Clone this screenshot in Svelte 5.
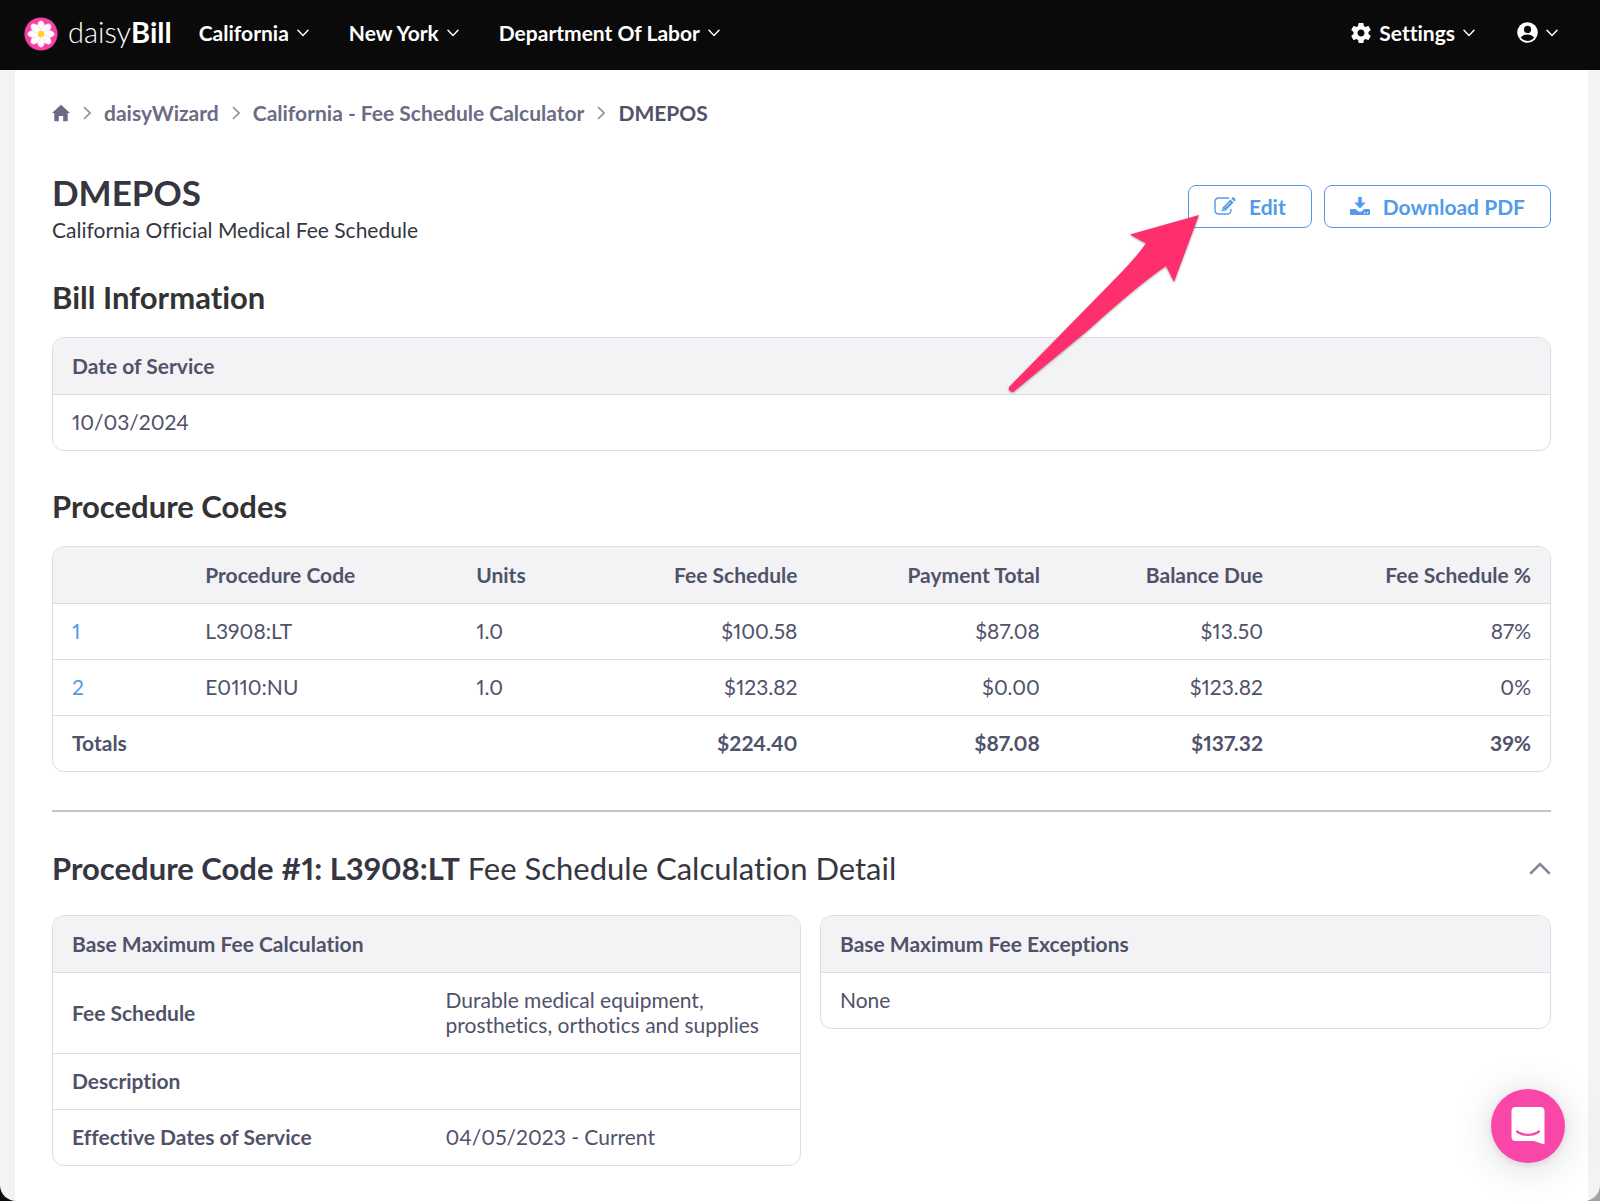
<script>
  const menus = ['California', 'New York', 'Department Of Labor'];

  const codes = [
    { id: 1, code: 'L3908:LT', units: '1.0', fee: '$100.58', paid: '$87.08', due: '$13.50', pct: '87%' },
    { id: 2, code: 'E0110:NU', units: '1.0', fee: '$123.82', paid: '$0.00', due: '$123.82', pct: '0%' }
  ];
  const totals = { fee: '$224.40', paid: '$87.08', due: '$137.32', pct: '39%' };

  const calculation = [
    { label: 'Fee Schedule', value: 'Durable medical equipment, prosthetics, orthotics and supplies' },
    { label: 'Description', value: '' },
    { label: 'Effective Dates of Service', value: '04/05/2023 - Current' }
  ];

  const petals = [0, 45, 90, 135, 180, 225, 270, 315];

  let open = true;
</script>

{#snippet down()}
  <svg class="down" width="12" height="8" viewBox="0 0 12 8" aria-hidden="true"><path d="M1 1.2 6 6.4 11 1.2" /></svg>
{/snippet}

{#snippet sep()}
  <svg class="sep" width="8" height="14" viewBox="0 0 8 14" aria-hidden="true"><path d="M1 1 7 7 1 13" /></svg>
{/snippet}

<div class="window">
  <header class="topbar">
    <a class="logo" href="/" aria-label="daisyBill">
      <svg width="34" height="34" viewBox="0 0 34 34" aria-hidden="true">
        <circle cx="17" cy="17" r="16.6" fill="#fa3fa4" />
        {#each petals as angle}
          <ellipse cx="17" cy="9.5" rx="3.6" ry="5.8" fill="#fff" stroke="#fbc6e2" stroke-width=".6" transform="rotate({angle} 17 17)" />
        {/each}
        <circle cx="17" cy="17" r="3.2" fill="#ffd51e" />
      </svg>
      <span class="word">daisy<b>Bill</b></span>
    </a>

    <nav class="menus">
      {#each menus as menu}
        <button type="button" class="menu">{menu}{@render down()}</button>
      {/each}
    </nav>

    <div class="menus user">
      <button type="button" class="menu">
        <svg width="20" height="20" viewBox="2 2 20 20" fill="#fff" aria-hidden="true">
          <path d="M19.43 12.98c.04-.32.07-.64.07-.98s-.03-.66-.07-.98l2.11-1.65c.19-.15.24-.42.12-.64l-2-3.46c-.12-.22-.39-.3-.61-.22l-2.49 1c-.52-.4-1.08-.73-1.69-.98l-.38-2.65C14.46 2.18 14.25 2 14 2h-4c-.25 0-.46.18-.49.42l-.38 2.65c-.61.25-1.17.59-1.69.98l-2.49-1c-.23-.09-.49 0-.61.22l-2 3.46c-.13.22-.07.49.12.64l2.11 1.65c-.04.32-.07.65-.07.98s.03.66.07.98l-2.11 1.65c-.19.15-.24.42-.12.64l2 3.46c.12.22.39.3.61.22l2.49-1c.52.4 1.08.73 1.69.98l.38 2.65c.03.24.24.42.49.42h4c.25 0 .46-.18.49-.42l.38-2.65c.61-.25 1.17-.59 1.69-.98l2.49 1c.23.09.49 0 .61-.22l2-3.46c.12-.22.07-.49-.12-.64l-2.11-1.65zM12 15.5c-1.93 0-3.5-1.57-3.5-3.5s1.57-3.5 3.5-3.5 3.5 1.57 3.5 3.5-1.57 3.5-3.5 3.5z" />
        </svg>
        Settings{@render down()}
      </button>
      <button type="button" class="menu" aria-label="Account">
        <svg width="21" height="21" viewBox="0 0 21 21" aria-hidden="true">
          <circle cx="10.5" cy="10.5" r="10.3" fill="#fff" />
          <circle cx="10.5" cy="7.4" r="3.6" fill="#0a0a0a" />
          <path d="M3.9 15.4c1.6-2 4-3 6.6-3s5 1 6.6 3a8 8 0 0 1-13.2 0z" fill="#0a0a0a" />
        </svg>
        {@render down()}
      </button>
    </div>
  </header>

  <main class="sheet">
    <nav class="crumbs" aria-label="Breadcrumb">
      <a href="/" aria-label="Home">
        <svg width="18" height="18" viewBox="0 0 18 18" fill="#6b6c84" aria-hidden="true"><path d="M9 .8 0 9h2.3v7.5c0 .5.3.8.8.8h3.7v-5.3h4.4v5.3h3.7c.5 0 .8-.3.8-.8V9H18z" /></svg>
      </a>
      {@render sep()}
      <a href="/wizard">daisyWizard</a>
      {@render sep()}
      <a href="/wizard/california">California - Fee Schedule Calculator</a>
      {@render sep()}
      <span class="current">DMEPOS</span>
    </nav>

    <div class="heading">
      <div>
        <h1>DMEPOS</h1>
        <p>California Official Medical Fee Schedule</p>
      </div>
      <div class="actions">
        <button type="button" class="btn">
          <svg width="22" height="18" viewBox="0 0 22 18" aria-hidden="true">
            <path d="M15 1H4.5A3.5 3.5 0 0 0 1 4.5v9A3.5 3.5 0 0 0 4.5 17h9a3.5 3.5 0 0 0 3.5-3.5V12" fill="none" stroke="#539ae9" stroke-width="1.4" />
            <path d="M16.4 2.4 19.6 5.6 11.8 13.6 7.6 14.6 8.6 10.4zM17.3 1.5l.7-.7c.6-.6 1.3-.6 1.8-.1l1.4 1.4c.5.5.5 1.2-.1 1.8l-.7.7z" fill="#539ae9" />
            <path d="M11 10.5 16.3 5.2M9.1 11.6 10.5 13" stroke="#fff" stroke-width=".8" />
          </svg>
          Edit
        </button>
        <button type="button" class="btn">
          <svg width="20" height="18" viewBox="0 0 20 18" fill="#539ae9" aria-hidden="true">
            <path d="M8.2 0h3.6v5.5h4L10 11.5 4.2 5.5h4z" />
            <path d="M1.3 12h4.3l2.6 2.2c1.1.9 2.5.9 3.6 0l2.6-2.2h4.3c.8 0 1.3.5 1.3 1.3v3.4c0 .8-.5 1.3-1.3 1.3H1.3C.5 18 0 17.5 0 16.7v-3.4C0 12.5.5 12 1.3 12z" />
            <path d="M14 15.3h1.5v1.2H14zM16.8 15.3h1.5v1.2h-1.5z" fill="#fff" />
          </svg>
          Download PDF
        </button>
        <!-- pointer to the Edit button -->
        <svg class="arrow" width="210" height="196" viewBox="0 0 210 196" aria-hidden="true">
          <path d="M200 10 131 29.5 147 38.5Q136 54 112 78L11 181A3.2 3.2 0 0 0 15.5 186L90 124.5Q138 81 167 61L175 77z" fill="#ff2f6e" />
        </svg>
      </div>
    </div>

    <h2>Bill Information</h2>
    <div class="box">
      <table>
        <thead><tr><th>Date of Service</th></tr></thead>
        <tbody><tr><td>10/03/2024</td></tr></tbody>
      </table>
    </div>

    <h2>Procedure Codes</h2>
    <div class="box">
      <table>
        <colgroup>
          <col class="c-id" /><col class="c-code" /><col class="c-units" /><col class="c-fee" />
          <col class="c-paid" /><col class="c-due" /><col />
        </colgroup>
        <thead>
          <tr>
            <th></th>
            <th>Procedure Code</th>
            <th>Units</th>
            <th class="num">Fee Schedule</th>
            <th class="num">Payment Total</th>
            <th class="num">Balance Due</th>
            <th class="num">Fee Schedule %</th>
          </tr>
        </thead>
        <tbody>
          {#each codes as row}
            <tr>
              <td><a href="#code-{row.id}">{row.id}</a></td>
              <td>{row.code}</td>
              <td>{row.units}</td>
              <td class="num">{row.fee}</td>
              <td class="num">{row.paid}</td>
              <td class="num">{row.due}</td>
              <td class="num">{row.pct}</td>
            </tr>
          {/each}
          <tr class="totals">
            <td colspan="3">Totals</td>
            <td class="num">{totals.fee}</td>
            <td class="num">{totals.paid}</td>
            <td class="num">{totals.due}</td>
            <td class="num">{totals.pct}</td>
          </tr>
        </tbody>
      </table>
    </div>

    <hr />

    <div class="detail-head" id="code-1">
      <h2><b>Procedure Code #1: L3908:LT</b> Fee Schedule Calculation Detail</h2>
      <button type="button" class="toggle" aria-label="Toggle details" aria-expanded={open} on:click={() => (open = !open)}>
        <svg width="22" height="14" viewBox="0 0 22 14" aria-hidden="true"><path d="M2 12 11 3 20 12" /></svg>
      </button>
    </div>

    {#if open}
      <div class="panels">
        <div class="box">
          <table>
            <thead><tr><th colspan="2">Base Maximum Fee Calculation</th></tr></thead>
            <tbody>
              {#each calculation as row}
                <tr><th scope="row">{row.label}</th><td>{row.value}</td></tr>
              {/each}
            </tbody>
          </table>
        </div>
        <div class="box">
          <table>
            <thead><tr><th>Base Maximum Fee Exceptions</th></tr></thead>
            <tbody><tr><td>None</td></tr></tbody>
          </table>
        </div>
      </div>
    {/if}
  </main>
</div>

<button type="button" class="chat" aria-label="Open chat">
  <svg width="34" height="38" viewBox="0 0 34 38" aria-hidden="true">
    <path d="M4.5 0h25A4 4 0 0 1 33.5 4v33.5L23 34H4.5A4 4 0 0 1 .5 30V4A4 4 0 0 1 4.5 0z" fill="#fff" />
    <path d="M6 24.5c6 4.5 16 4.5 22 0" fill="none" stroke="#fa46a8" stroke-width="2.2" stroke-linecap="round" />
  </svg>
</button>

<style>
  :global(body) {
    background: linear-gradient(90deg, #0c0d05 50%, #a2a2a4 50%);
  }

  .window {
    --ink: #35363f;
    --text: #50526a;
    --line: #dcdde3;
    --fill: #f3f3f6;
    --blue: #539ae9;
    display: flex;
    flex-direction: column;
    min-height: 100vh;
    box-sizing: border-box;
    background: var(--fill);
    border-radius: 0 0 16px 16px;
    overflow: hidden;
    color: var(--text);
    font: 400 21px/25px Lato, "Open Sans", sans-serif;
    font-variant-ligatures: none;
    font-variant-numeric: proportional-nums;
  }

  button { font: inherit; font-variant-ligatures: none; cursor: pointer; }
  a { color: inherit; text-decoration: none; }
  svg { flex: none; }

  /* top bar */
  .topbar {
    display: flex;
    align-items: center;
    height: 70px;
    padding: 0 42px 3px 24px;
    box-sizing: border-box;
    background: #0a0a0a;
    color: #fff;
  }
  .logo { display: flex; align-items: center; gap: 10px; margin-right: 27px; }
  .word { padding-bottom: 3px; font-size: 29px; line-height: 34px; font-weight: 300; }
  .word b { font-weight: 700; }
  .menus { display: flex; gap: 40px; }
  nav.menus { flex: 1; }
  .menus.user { gap: 42px; }
  .menu {
    display: flex;
    align-items: center;
    gap: 8px;
    padding: 0 0 2px;
    border: 0;
    background: none;
    color: #fff;
    font-weight: 700;
  }
  .down path { fill: none; stroke: #fff; stroke-width: 1.5; stroke-linecap: round; }

  /* white page */
  .sheet {
    flex: 1;
    margin: 0 12px 0 15px;
    padding: 30px 37px;
    background: #fff;
  }

  .crumbs {
    display: flex;
    align-items: center;
    gap: 13px;
    color: #6b6c84;
    font-weight: 700;
  }
  .crumbs a { display: flex; }
  .crumbs .current { color: var(--text); }
  .sep path { fill: none; stroke: #8d8ea3; stroke-width: 1.6; }

  .heading {
    display: flex;
    justify-content: space-between;
    align-items: center;
    margin-top: 45px;
    color: var(--ink);
  }
  h1 { margin: 0; font-size: 35px; line-height: 44px; font-weight: 700; }
  .heading p { margin: 3px 0 0; }

  .actions { position: relative; display: flex; gap: 12px; }
  .btn {
    display: flex;
    align-items: center;
    gap: 13px;
    height: 43px;
    padding: 0 25px;
    border: 1px solid var(--blue);
    border-radius: 8px;
    background: #fff;
    color: var(--blue);
    font-weight: 700;
  }
  .arrow {
    position: absolute;
    left: -189px;
    top: 20px;
    filter: drop-shadow(0 1px 1px rgba(0, 0, 0, .35));
    pointer-events: none;
  }

  h2 {
    margin: 37px 0 22px;
    color: #333;
    font-size: 31px;
    line-height: 36px;
    font-weight: 700;
  }

  /* tables */
  .box { border: 1px solid var(--line); border-radius: 12px; overflow: hidden; }
  table { width: 100%; border-collapse: separate; border-spacing: 0; table-layout: fixed; }
  th, td { padding: 14px 19px 16px; text-align: left; font-weight: 400; }
  th { font-weight: 700; }
  thead th { height: 26px; background: var(--fill); }
  tbody th, tbody td { border-top: 1px solid var(--line); }
  td a { color: var(--blue); }
  .num { text-align: right; }
  .totals td { font-weight: 700; }

  .c-id { width: 8.9%; }
  .c-code { width: 18.1%; }
  .c-units { width: 11%; }
  .c-fee { width: 13%; }
  .c-paid { width: 16.2%; }
  .c-due { width: 14.9%; }

  hr { height: 2px; margin: 38px 0; border: 0; background: #c6c6c8; }

  .detail-head { display: flex; justify-content: space-between; align-items: center; margin-bottom: 29px; }
  .detail-head h2 { margin: 0; color: var(--ink); font-weight: 400; }
  .detail-head b { font-weight: 700; }
  .toggle { display: flex; padding: 0; border: 0; background: none; }
  .toggle path { fill: none; stroke: #84879c; stroke-width: 2.5; stroke-linecap: round; }

  .panels { display: grid; grid-template-columns: 749fr 731fr; gap: 19px; align-items: start; }

  /* chat launcher floats over the page */
  .chat {
    position: fixed;
    right: 35px;
    bottom: 38px;
    display: flex;
    align-items: center;
    justify-content: center;
    width: 74px;
    height: 74px;
    padding: 0;
    border: 0;
    border-radius: 50%;
    background: #fa46a8;
    box-shadow: 0 2px 8px rgba(0, 0, 0, .1), 0 4px 40px rgba(0, 0, 0, .15);
  }
</style>
